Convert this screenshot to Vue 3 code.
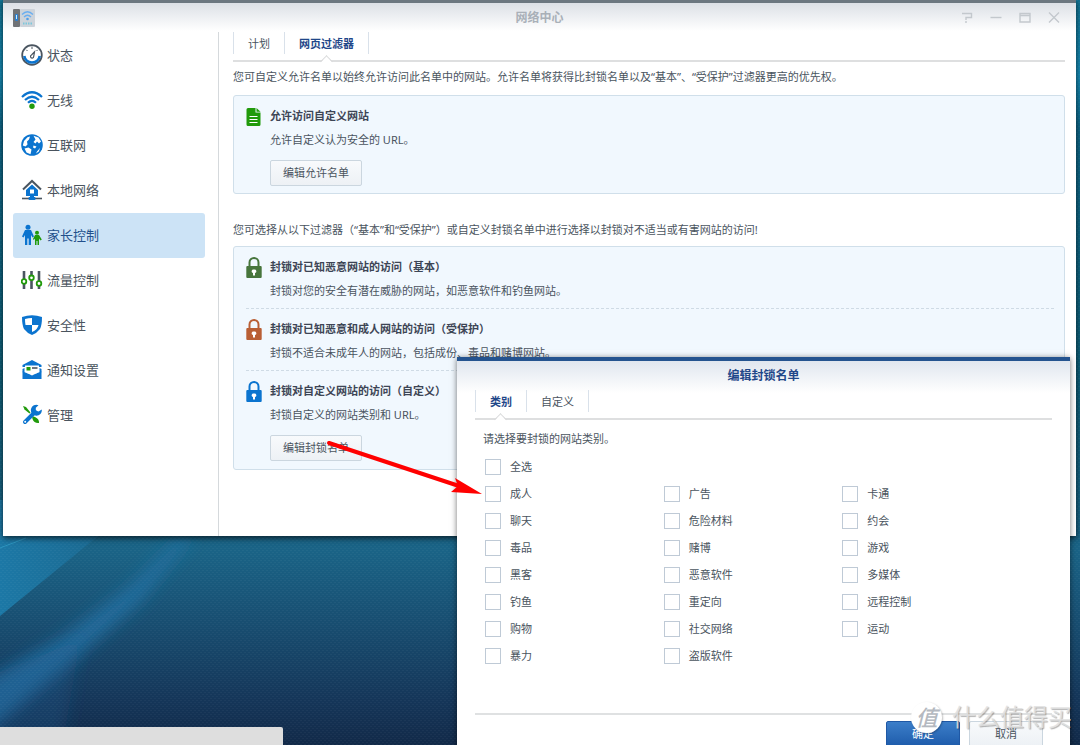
<script setup>
import { ref } from 'vue'

const navItems = [
  { id: 'status', label: '状态' },
  { id: 'wifi', label: '无线' },
  { id: 'internet', label: '互联网' },
  { id: 'lan', label: '本地网络' },
  { id: 'parental', label: '家长控制' },
  { id: 'traffic', label: '流量控制' },
  { id: 'security', label: '安全性' },
  { id: 'notify', label: '通知设置' },
  { id: 'manage', label: '管理' }
]
const activeNav = ref('parental')

const filters = [
  {
    tone: 'green',
    title: '封锁对已知恶意网站的访问（基本）',
    text: '封锁对您的安全有潜在威胁的网站，如恶意软件和钓鱼网站。'
  },
  {
    tone: 'orange',
    title: '封锁对已知恶意和成人网站的访问（受保护）',
    text: '封锁不适合未成年人的网站，包括成份、毒品和赌博网站。'
  },
  {
    tone: 'blue',
    title: '封锁对自定义网站的访问（自定义）',
    text: '封锁自定义的网站类别和 URL。',
    action: '编辑封锁名单'
  }
]

const categories = [
  '成人', '广告', '卡通',
  '聊天', '危险材料', '约会',
  '毒品', '赌博', '游戏',
  '黑客', '恶意软件', '多媒体',
  '钓鱼', '重定向', '远程控制',
  '购物', '社交网络', '运动',
  '暴力', '盗版软件'
]
const checked = ref([])
</script>

<template>
  <div class="desktop">
    <svg class="wallpaper" viewBox="0 0 1080 745" preserveAspectRatio="none" aria-hidden="true">
      <defs>
        <linearGradient id="sky" x1="0" y1="0" x2="0" y2="1">
          <stop offset="0" stop-color="#107394" />
          <stop offset="0.1" stop-color="#158bb5" />
          <stop offset="0.17" stop-color="#0d6688" />
          <stop offset="0.5" stop-color="#0e5f78" />
          <stop offset="0.74" stop-color="#1a6386" />
          <stop offset="0.84" stop-color="#184d70" />
          <stop offset="0.94" stop-color="#153659" />
          <stop offset="1" stop-color="#122a49" />
        </linearGradient>
        <linearGradient id="fan" x1="0" y1="0" x2="1" y2="0">
          <stop offset="0" stop-color="#1c78a6" />
          <stop offset="1" stop-color="#1b6387" />
        </linearGradient>
        <filter id="soft" x="-30%" y="-30%" width="160%" height="160%">
          <feGaussianBlur stdDeviation="8" />
        </filter>
        <pattern id="weave" width="4" height="4" patternUnits="userSpaceOnUse">
          <rect width="2" height="1" fill="#ffffff" fill-opacity="0.035" />
          <rect x="2" y="2" width="2" height="1" fill="#ffffff" fill-opacity="0.035" />
        </pattern>
      </defs>
      <rect width="1080" height="745" fill="url(#sky)" />
      <path d="M0 500H150L92 541L0 616Z" fill="url(#fan)" />
      <path d="M182 536L192 536L140 602L60 672L-30 745V690L60 638L130 586Z" fill="#2575ab" fill-opacity="0.7" filter="url(#soft)" />
      <path d="M-20 680L80 640L60 760H-20Z" fill="#1d5c90" fill-opacity="0.3" filter="url(#soft)" />
      <path d="M0 548L26 538" stroke="#2b93bf" stroke-width="1" />
      <rect width="1080" height="745" fill="url(#weave)" />
    </svg>

    <section class="window">
      <header class="titlebar">
        <svg class="app-icon" width="22" height="18" viewBox="0 0 22 18" aria-hidden="true">
          <rect width="7" height="18" rx="1" fill="#6f7276" />
          <rect x="2" y="5" width="3" height="7" rx="1" fill="#2b7fd0" />
          <rect x="3" y="6" width="1" height="4" fill="#c5ecff" />
          <rect x="7" width="15" height="18" rx="1" fill="#cdd3da" />
          <g fill="none" stroke="#6aaef0" stroke-width="1.3">
            <path d="M9 5.500Q14.500 0 20 5.500" />
            <path d="M11 8Q14.500 4.500 18 8" />
          </g>
          <circle cx="14.500" cy="10" r="1.300" fill="#4f9eea" />
          <path d="M10 14.500H19.500" stroke="#7cc7dc" stroke-width="2" stroke-dasharray="1.500 1" />
        </svg>
        <h1 class="window-title">网络中心</h1>
        <div class="window-buttons">
          <button type="button" aria-label="帮助">
            <svg width="12" height="12" viewBox="0 0 12 12"><path d="M1 1.500H10.500V5.500H5V8M5 9V11" /></svg>
          </button>
          <button type="button" aria-label="最小化">
            <svg width="12" height="12" viewBox="0 0 12 12"><path d="M0.500 5.500H11.500" /></svg>
          </button>
          <button type="button" aria-label="最大化">
            <svg width="12" height="12" viewBox="0 0 12 12"><path d="M1 1.500H11V10H1ZM1 3.500H11" /></svg>
          </button>
          <button type="button" aria-label="关闭">
            <svg width="12" height="12" viewBox="0 0 12 12"><path d="M1 0.500L11 10.500M11 0.500L1 10.500" /></svg>
          </button>
        </div>
      </header>

      <div class="window-body">
        <nav class="sidebar">
          <button
            v-for="item in navItems"
            :key="item.id"
            type="button"
            class="nav-item"
            :class="{ active: item.id === activeNav }"
            @click="activeNav = item.id"
          >
            <svg class="nav-icon" width="22" height="22" viewBox="0 0 22 22" aria-hidden="true">
              <g v-if="item.id === 'status'" fill="none">
                <circle cx="11" cy="11" r="9.800" stroke="#4a5560" stroke-width="1.800" />
                <path d="M3.300 12A7.800 7.800 0 0 0 18.700 12" stroke="#0b74cf" stroke-width="2.600" />
                <path d="M11 2.500V5M5.300 5.800L6.500 7M16.700 5.800L15.500 7" stroke="#4a5560" />
                <path d="M13.500 7.800L12.700 12.500A1.600 1.600 0 1 1 10.500 11Z" stroke="#4a5560" stroke-width="1.200" />
              </g>
              <g v-else-if="item.id === 'wifi'" fill="none" stroke="#0b74cf" stroke-width="2.200">
                <path d="M1 8Q11 -1.500 21 8" />
                <path d="M4 11Q11 4.500 18 11" />
                <path d="M7 13.800Q11 10 15 13.800" />
                <circle cx="11" cy="17.200" r="2.700" fill="#219a0b" stroke="none" />
              </g>
              <g v-else-if="item.id === 'internet'">
                <circle cx="11" cy="11" r="10.800" fill="#0b74cf" />
                <path d="M3 7L6.500 3.200L9 2.500L8 5.500L6 7.500L6.500 10.500L4.500 12.500L1.800 11.500Z" fill="#fff" />
                <path d="M12.500 1.700L17.500 3.500L20 7.500L18 9.500L16 7.500L14.500 9.500L12.500 8L14.500 5.500Z" fill="#fff" />
                <path d="M3.500 14.500L7.500 13.500L10.500 15.500L9.500 20.200L5.500 18.500Z" fill="#fff" />
                <path d="M12.500 11.500L15.500 12.500L14 14.500L12 13.500Z" fill="#fff" />
                <path d="M16 17.500L19 14L17.800 17.500L15 19.500Z" fill="#fff" />
              </g>
              <g v-else-if="item.id === 'lan'">
                <path d="M2 10.500L11 2L20 10.500" fill="none" stroke="#4a5560" stroke-width="2" />
                <path d="M11 5.500L17 11V17H13V18H9V17H5V11Z" fill="#0b74cf" />
                <rect x="9" y="10.500" width="4" height="4" fill="#fff" />
                <path d="M1 19.500H21" stroke="#4a5560" stroke-width="1.600" />
                <rect x="7.500" y="18" width="7" height="3" rx="1" fill="#0b74cf" />
              </g>
              <g v-else-if="item.id === 'parental'">
                <circle cx="7" cy="3.200" r="2.500" fill="#0b74cf" />
                <path d="M4 6H10L13 12.500L11.500 13.500L10 11V21H7.700V14.500H6.300V21H4V11L2.500 13.500L1 12.500Z" fill="#0b74cf" />
                <circle cx="16" cy="8.700" r="2" fill="#219a0b" />
                <path d="M14 11H18L20.800 15.500L19.500 16.500L18 14.500V21H16.500V17H15.500V21H14V14.500L12.800 16L12 15Z" fill="#219a0b" />
              </g>
              <g v-else-if="item.id === 'traffic'">
                <path d="M3 2V20M10.500 2V20M18 2V20" stroke="#4a5560" stroke-width="2.600" />
                <g fill="#fff" stroke="#219a0b" stroke-width="1.800">
                  <circle cx="3" cy="12.500" r="2.300" />
                  <circle cx="10.500" cy="8.800" r="2.300" />
                  <circle cx="18" cy="14.500" r="2.300" />
                </g>
              </g>
              <g v-else-if="item.id === 'security'">
                <path d="M1 3Q11 -0.500 21 3Q21 11 19 15Q16 19 11 21Q6 19 3 15Q1 11 1 3Z" fill="#0b74cf" />
                <path d="M11 4V11H4.500Q4 8 4 5Q7.500 4 11 4Z" fill="#fff" />
                <path d="M11 11H17.500Q16.500 16 11 18Z" fill="#fff" />
              </g>
              <g v-else-if="item.id === 'notify'">
                <path d="M1.500 6L11 1L20.500 6V8H1.500Z" fill="#0b74cf" />
                <path d="M1.500 10L3.500 9V15L1.500 13ZM20.500 10L18.500 9V15L20.500 13Z" fill="#0b74cf" />
                <rect x="4" y="6.500" width="14" height="9" fill="#fff" />
                <rect x="5.500" y="8" width="4" height="3.500" fill="#219a0b" />
                <path d="M11 9H16.500" stroke="#4a5560" stroke-width="1.600" />
                <path d="M1.500 12.500L7 14.500H15L20.500 12.500V20H1.500Z" fill="#0b74cf" />
                <path d="M6 14H16L11 16.500Z" fill="#fff" />
              </g>
              <g v-else>
                <path d="M2 2L5 3L9.500 8.500L8.500 9.500L3.500 5.500Z" fill="#219a0b" />
                <path d="M11 12L14 13Q18.500 15 18 19Q13 19.500 11.500 15Z" fill="#219a0b" />
                <path d="M4 18L14 8" stroke="#0b74cf" stroke-width="4" stroke-linecap="round" />
                <path d="M17.500 1.200A5.500 5.500 0 1 0 20.800 5.500L17.500 7.500L14.800 6.500L14.800 3.700Z" fill="#0b74cf" />
                <circle cx="4.200" cy="17.800" r="1" fill="#fff" />
              </g>
            </svg>
            <span>{{ item.label }}</span>
          </button>
        </nav>

        <main class="content">
          <div class="tabs">
            <button type="button" class="tab">计划</button>
            <button type="button" class="tab selected">网页过滤器</button>
          </div>

          <p class="intro">您可自定义允许名单以始终允许访问此名单中的网站。允许名单将获得比封锁名单以及“基本”、“受保护”过滤器更高的优先权。</p>

          <div class="panel">
            <div class="entry">
              <svg class="entry-icon" width="16" height="20" viewBox="0 0 16 20" aria-hidden="true">
                <path d="M2 0H9.500V4.500H14.500V16.500Q14.500 18 13 18H2Q0.500 18 0.500 16.500V1.500Q0.500 0 2 0Z" fill="#219a0b" />
                <path d="M10.500 0L14.500 3.700H10.500Z" fill="#219a0b" />
                <path d="M3.500 8.500H11.500M3.500 11.500H11.500M3.500 14.500H11.500" stroke="#fff" stroke-width="1.200" />
              </svg>
              <div class="entry-text">
                <h2>允许访问自定义网站</h2>
                <p>允许自定义认为安全的 URL。</p>
                <button type="button" class="btn">编辑允许名单</button>
              </div>
            </div>
          </div>

          <p class="intro second">您可选择从以下过滤器（“基本”和“受保护”）或自定义封锁名单中进行选择以封锁对不适当或有害网站的访问!</p>

          <div class="panel">
            <div v-for="filter in filters" :key="filter.tone" class="entry">
              <svg class="entry-icon" :class="filter.tone" width="16" height="20" viewBox="0 0 16 20" aria-hidden="true">
                <path d="M3.500 8V3.500A4.500 4.500 0 0 1 12.500 3.500V8" fill="none" stroke="currentColor" stroke-width="2" />
                <rect x="0.300" y="7" width="15.400" height="12" rx="1" fill="currentColor" />
                <path d="M8 10.500A1.800 1.800 0 0 1 9 14V16.500H7V14A1.800 1.800 0 0 1 8 10.500Z" fill="#fff" />
              </svg>
              <div class="entry-text">
                <h2>{{ filter.title }}</h2>
                <p>{{ filter.text }}</p>
                <button v-if="filter.action" type="button" class="btn">{{ filter.action }}</button>
              </div>
            </div>
          </div>
        </main>
      </div>
    </section>

    <div class="status-strip"></div>

    <section class="dialog" role="dialog" aria-labelledby="dialog-title">
      <h2 id="dialog-title" class="dialog-title">编辑封锁名单</h2>
      <div class="tabs">
        <button type="button" class="tab selected">类别</button>
        <button type="button" class="tab">自定义</button>
      </div>
      <div class="dialog-body">
        <p>请选择要封锁的网站类别。</p>
        <label class="check"><input type="checkbox" />全选</label>
        <div class="check-grid">
          <label v-for="name in categories" :key="name" class="check">
            <input v-model="checked" type="checkbox" :value="name" />{{ name }}
          </label>
        </div>
      </div>
      <footer class="dialog-footer">
        <button type="button" class="btn primary">确定</button>
        <button type="button" class="btn">取消</button>
      </footer>
    </section>

    <svg class="arrow" width="160" height="60" viewBox="0 0 160 60" aria-hidden="true">
      <path d="M4 4L134 47" stroke="#ff0000" stroke-width="4" stroke-linecap="round" />
      <path d="M157 55L130 39L133 47L126 53Z" fill="#ff0000" />
    </svg>

    <div class="watermark" aria-hidden="true">
      <span class="badge">值</span>
      <span class="brand">什么值得买</span>
    </div>
  </div>
</template>

<style>
html,
body {
  margin: 0;
  overflow: hidden;
}
</style>

<style scoped>
.desktop {
  position: relative;
  min-height: 100vh;
  overflow: hidden;
  font-family: "Noto Sans", "Noto Sans CJK SC", sans-serif;
  font-size: 11px;
  line-height: 16px;
  color: #4a545e;
}

button {
  font: inherit;
  color: inherit;
  background: none;
  border: 0;
  padding: 0;
}

h1,
h2,
p {
  margin: 0;
}

.wallpaper {
  position: absolute;
  inset: 0;
  width: 100%;
  height: 100%;
}

.window {
  position: relative;
  margin: 0 4px 0 3px;
  background: linear-gradient(#dce0e6, #fff 28px) no-repeat #fff;
  border-top: 3px solid #6c7780;
  box-shadow: 0 2px 6px rgba(0, 0, 0, 0.7);
}

.titlebar {
  display: grid;
  grid-template-columns: 1fr auto 1fr;
  align-items: center;
  height: 29px;
  padding: 0 16px 0 10px;
}

.window-title {
  font-size: 12px;
  line-height: 18px;
  color: #a9b0b8;
  padding-left: 6px;
}

.window-buttons {
  display: flex;
  justify-content: flex-end;
  gap: 17px;
}

.window-buttons svg {
  display: block;
  fill: none;
  stroke: #c3c8cd;
  stroke-width: 1.4;
}

.window-body {
  display: flex;
}

.sidebar {
  flex: 0 0 215px;
  box-sizing: border-box;
  padding: 1px 13px 0 10px;
}

.nav-item {
  display: flex;
  align-items: center;
  gap: 4px;
  width: 100%;
  height: 45px;
  padding: 0 0 2px 8px;
  border-radius: 3px;
  font-size: 13px;
  line-height: 20px;
}

.nav-item.active {
  background: #cce3f6;
  color: #22508c;
}

.content {
  flex: 1;
  min-width: 0;
  border-left: 1px solid #d5d9dc;
  padding: 0 11px 66px 14px;
}

.tabs {
  display: flex;
  height: 28px;
  border-bottom: 2px solid #dedfe0;
}

.tab {
  position: relative;
  height: 22px;
  padding: 2px 14px 0;
  border-right: 1px solid #d9e1ea;
  white-space: nowrap;
}

.tab:first-child {
  border-left: 1px solid #d9e1ea;
}

.tab.selected {
  font-weight: 700;
  color: #1f4789;
}

.tab.selected::after {
  content: "";
  position: absolute;
  left: 50%;
  bottom: -12px;
  width: 8px;
  height: 8px;
  margin-left: -5px;
  border: solid #d9dadb;
  border-width: 1px 0 0 1px;
  background: linear-gradient(135deg, #fff 50%, transparent 50%);
  transform: rotate(45deg);
}

.intro {
  margin: 7px 0 10px;
  white-space: nowrap;
}

.intro.second {
  margin: 28px 0 8px;
}

.panel {
  border: 1px solid #d0dfea;
  border-radius: 3px;
  background: #f1f8fe;
  padding: 0 10px 7px 12px;
}

.panel + .intro + .panel {
  padding-bottom: 8px;
}

.entry {
  display: flex;
  gap: 8px;
  padding: 12px 0 9px;
}

.entry:last-child {
  padding-bottom: 0;
}

.entry + .entry {
  border-top: 1px dashed #cfdbe5;
}

.entry-icon {
  flex: none;
  display: block;
  overflow: visible;
}

.green {
  color: #47753c;
}

.orange {
  color: #b95f35;
}

.blue {
  color: #0b74cf;
}

.entry-text h2 {
  font-size: 11px;
  line-height: 16px;
  color: #3d4555;
}

.entry-text p {
  margin-top: 8px;
}

.btn {
  height: 26px;
  padding: 0 12px;
  border: 1px solid #cbd6df;
  border-radius: 2px;
  background: linear-gradient(#f8fafc, #edf1f5);
}

.entry-text .btn {
  display: block;
  margin-top: 12px;
}

.status-strip {
  position: absolute;
  left: 0;
  bottom: 0;
  width: 283px;
  height: 18px;
  border-radius: 0 2px 0 0;
  background: #dedede;
}

.dialog {
  position: absolute;
  left: 457px;
  right: 10px;
  top: 357px;
  padding: 0 18px;
  border-top: 4px solid #24538f;
  background: linear-gradient(#e0e6ef, #fff 32px) no-repeat #fff;
  box-shadow: 0 1px 6px rgba(0, 0, 0, 0.55);
}

.dialog-title {
  font-size: 12px;
  line-height: 29px;
  color: #1f4789;
  text-align: center;
}

.dialog-body {
  padding: 11px 10px 44px;
}

.dialog-body p {
  margin: 0 0 6px -2px;
}

.check {
  display: flex;
  align-items: center;
  gap: 9px;
  height: 27px;
}

.check-grid {
  display: grid;
  grid-template-columns: repeat(3, 1fr);
  margin-right: 21px;
}

.check input {
  appearance: none;
  width: 16px;
  height: 16px;
  margin: 0;
  border: 1px solid #bfcad6;
  background: #fff;
}

.check input:checked {
  background: #0b74cf;
}

.dialog-footer {
  display: flex;
  justify-content: flex-end;
  gap: 9px;
  padding: 6px 9px 12px;
  border-top: 2px solid #dfe1e2;
}

.dialog-footer .btn {
  width: 74px;
}

.btn.primary {
  border-color: #1f58a5;
  background: linear-gradient(#3c7ec9, #1e5cab);
  color: #fff;
}

.arrow {
  position: absolute;
  left: 325px;
  top: 439px;
  pointer-events: none;
}

.watermark {
  position: absolute;
  right: 8px;
  bottom: 12px;
  display: flex;
  align-items: center;
  gap: 10px;
  pointer-events: none;
}

.badge {
  width: 31px;
  height: 31px;
  border-radius: 50%;
  background: #fff;
  box-shadow: 1px 1px 2px rgba(0, 0, 0, 0.25);
  color: #b4b9c0;
  font-size: 22px;
  font-style: italic;
  font-weight: 500;
  line-height: 30px;
  text-align: center;
}

.brand {
  color: rgba(225, 225, 225, 0.85);
  font-size: 24px;
  line-height: 32px;
  text-shadow: 1px 1px 1px rgba(0, 0, 0, 0.3);
}
</style>
